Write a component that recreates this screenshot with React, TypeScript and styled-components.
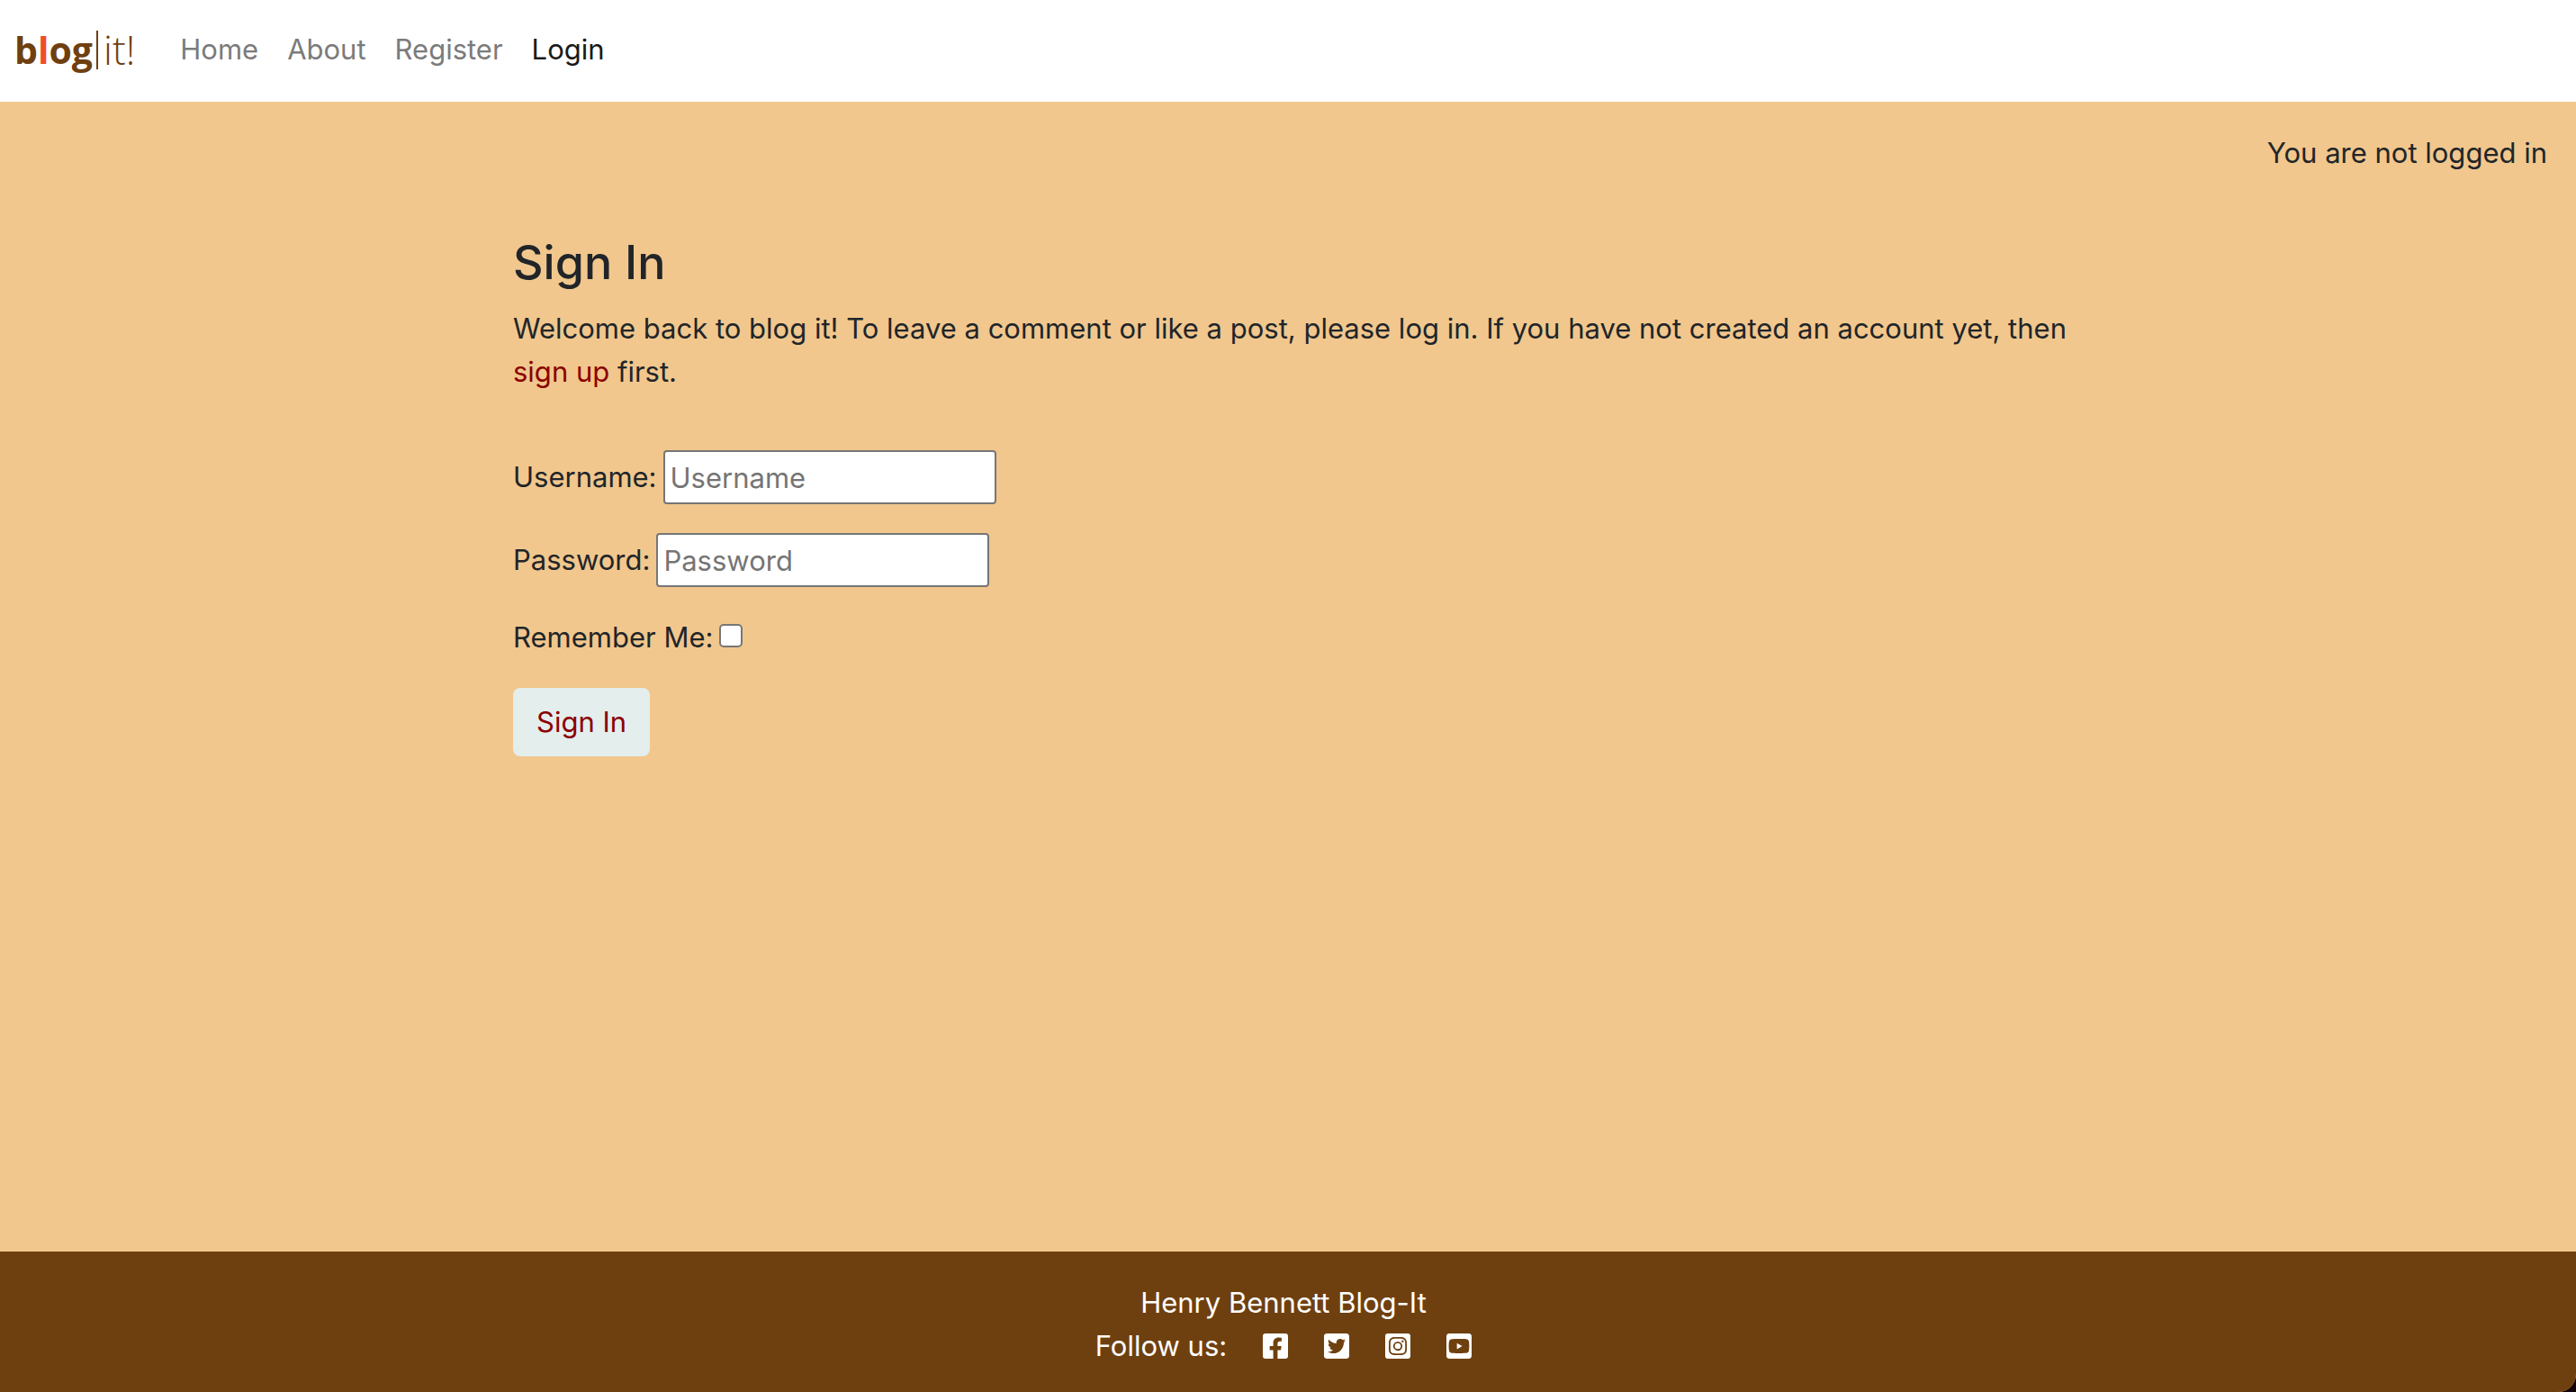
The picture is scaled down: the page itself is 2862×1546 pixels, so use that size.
import React from "react";
import styled, { createGlobalStyle } from "styled-components";
import {
  FaFacebookSquare,
  FaTwitterSquare,
  FaInstagramSquare,
  FaYoutubeSquare,
} from "react-icons/fa";

const sans = `Inter, "Liberation Sans", sans-serif`;

const GlobalStyle = createGlobalStyle`
  *, *::before, *::after { box-sizing: border-box; }
  body {
    margin: 0;
    background: #14050a;
    color: #212529;
    font: 400 31px/48px ${sans};
  }
`;

const Page = styled.div`
  display: flex;
  flex-direction: column;
  min-height: 100vh;
  overflow: hidden;
  border-bottom-right-radius: 20px;
  background: #f1c78d;
`;

const Navbar = styled.header`
  display: flex;
  align-items: center;
  gap: 50px;
  padding: 31px 16px 34px;
  background: #fff;
`;

const Logo = styled.a`
  display: flex;
  align-items: center;
  color: #6f400f;
  font-family: "Open Sans", sans-serif;
  text-decoration: none;
`;

const LogoBold = styled.span`
  font-size: 41px;
  font-weight: 700;
`;

const LogoAccent = styled.span`
  color: #f04e23;
`;

const LogoRule = styled.span`
  width: 2px;
  height: 43px;
  margin: 0 6px 0 4px;
  background: currentColor;
`;

const LogoLight = styled.span`
  font-size: 44px;
  font-weight: 300;
`;

const Nav = styled.nav`
  display: flex;
  gap: 32px;
`;

const NavLink = styled.a<{ $active?: boolean }>`
  color: ${(p) => (p.$active ? "#1a1a1a" : "#7b7b7b")};
  text-decoration: none;
`;

const Status = styled.p`
  margin: 0;
  padding: 33px 32px 0;
  text-align: right;
`;

const Main = styled.main`
  flex: 1;
  display: grid;
  grid-template-columns: 10fr 31fr 9fr;
  align-content: start;
  padding: 64px 12px 32px 0;
`;

const Content = styled.section`
  grid-column: 2;
`;

const Title = styled.h1`
  margin: 0 0 16px;
  font-size: 52px;
  font-weight: 500;
  line-height: 67px;
`;

const Intro = styled.p`
  margin: 0 0 63px;
`;

const TextLink = styled.a`
  color: #8b0000;
  text-decoration: none;
`;

const Form = styled.form`
  display: flex;
  flex-direction: column;
  align-items: flex-start;
  gap: 32px;
`;

const Field = styled.div`
  display: flex;
  align-items: center;
  gap: 7px;
`;

const TextInput = styled.input`
  width: 370px;
  height: 60px;
  padding: 2px 6px;
  border: 2px solid #767676;
  border-radius: 4px;
  background: #fff;
  color: #212529;
  font: inherit;

  &::placeholder {
    color: #757575;
    opacity: 1;
  }
`;

const Checkbox = styled.input`
  appearance: none;
  width: 26px;
  height: 26px;
  margin: 0 0 4px;
  border: 2px solid #767676;
  border-radius: 5px;
  background: #fff;

  &:checked {
    background: #8b0000;
  }
`;

const SubmitButton = styled.button`
  padding: 14px 26px;
  border: 0;
  border-radius: 8px;
  background: #e3eeed;
  color: #8b0000;
  font: inherit;
`;

const Footer = styled.footer`
  display: flex;
  flex-direction: column;
  align-items: center;
  padding: 33px 10px 27px 0;
  background: #6f400f;
  color: #fff;
`;

const FooterLine = styled.div`
  display: flex;
  align-items: center;
  gap: 40px;
`;

const Social = styled.a`
  display: flex;
  color: #fff;

  svg {
    width: 28px;
    height: 32px;
  }
`;

const socials = [
  { label: "Facebook", Icon: FaFacebookSquare },
  { label: "Twitter", Icon: FaTwitterSquare },
  { label: "Instagram", Icon: FaInstagramSquare },
  { label: "YouTube", Icon: FaYoutubeSquare },
];

export default function App() {
  return (
    <>
      <GlobalStyle />
      <Page>
        <Navbar>
          <Logo href="#">
            <LogoBold>
              b<LogoAccent>l</LogoAccent>og
            </LogoBold>
            <LogoRule />
            <LogoLight>it!</LogoLight>
          </Logo>
          <Nav>
            <NavLink href="#">Home</NavLink>
            <NavLink href="#">About</NavLink>
            <NavLink href="#">Register</NavLink>
            <NavLink href="#" $active aria-current="page">
              Login
            </NavLink>
          </Nav>
        </Navbar>
        <Status>You are not logged in</Status>
        <Main>
          <Content>
            <Title>Sign In</Title>
            <Intro>
              Welcome back to blog it! To leave a comment or like a post, please
              log in. If you have not created an account yet, then{" "}
              <TextLink href="#">sign up</TextLink> first.
            </Intro>
            <Form onSubmit={(e) => e.preventDefault()}>
              <Field>
                <label htmlFor="username">Username:</label>
                <TextInput id="username" type="text" placeholder="Username" />
              </Field>
              <Field>
                <label htmlFor="password">Password:</label>
                <TextInput
                  id="password"
                  type="password"
                  placeholder="Password"
                />
              </Field>
              <Field>
                <label htmlFor="remember">Remember Me:</label>
                <Checkbox id="remember" type="checkbox" />
              </Field>
              <SubmitButton type="submit">Sign In</SubmitButton>
            </Form>
          </Content>
        </Main>
        <Footer>
          <FooterLine>Henry Bennett Blog-It</FooterLine>
          <FooterLine>
            <span>Follow us:</span>
            {socials.map(({ label, Icon }) => (
              <Social key={label} href="#" aria-label={label}>
                <Icon />
              </Social>
            ))}
          </FooterLine>
        </Footer>
      </Page>
    </>
  );
}
